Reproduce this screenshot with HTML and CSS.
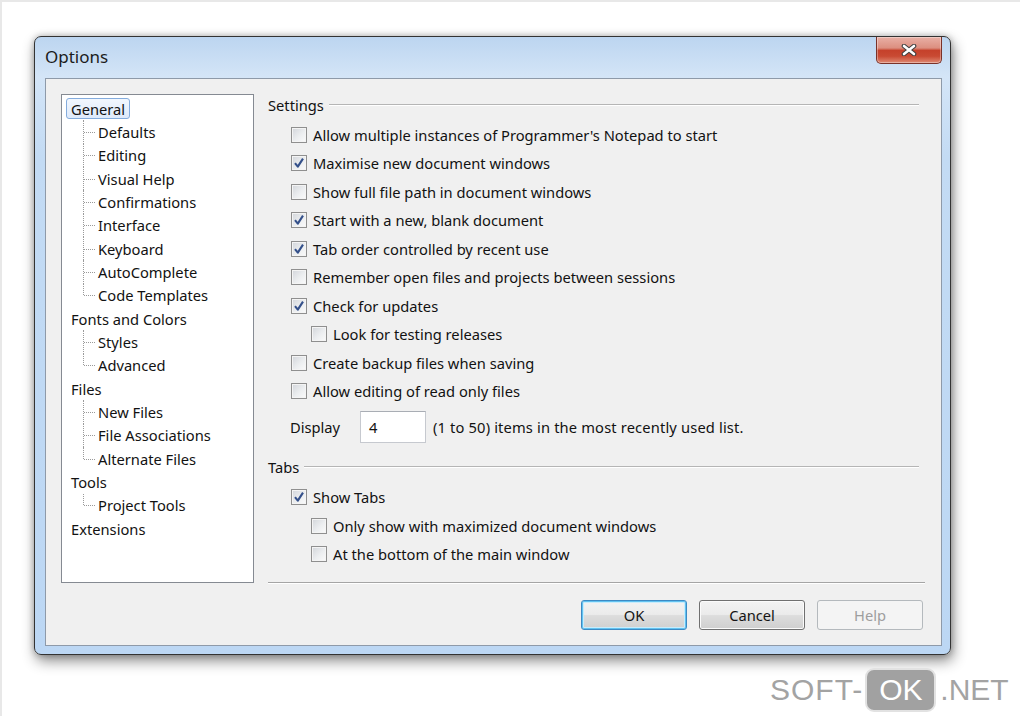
FILE: index.html
```html
<!DOCTYPE html>
<html>
<head>
<meta charset="utf-8">
<title>Options</title>
<link rel="stylesheet" href="styles.css">
</head>
<body>
<div class="page">
  <div class="window">
    <div class="titlebar">
      <div class="title">Options</div>
      <div class="close">
        <svg width="16" height="12" viewBox="0 0 16 12">
          <path d="M3 2 L13 10 M13 2 L3 10" stroke="#3d3d3d" stroke-width="4.6" stroke-linecap="round"/>
          <path d="M3 2 L13 10 M13 2 L3 10" stroke="#ffffff" stroke-width="2.6" stroke-linecap="round"/>
        </svg>
      </div>
    </div>
    <div class="client">
      <div class="main">
        <div class="tree">
          <ul class="roots">
            <li class="top">
              <div class="row"><span class="label selected">General</span></div>
              <ul class="children">
                <li><div class="row">Defaults</div></li>
                <li><div class="row">Editing</div></li>
                <li><div class="row">Visual Help</div></li>
                <li><div class="row">Confirmations</div></li>
                <li><div class="row">Interface</div></li>
                <li><div class="row">Keyboard</div></li>
                <li><div class="row">AutoComplete</div></li>
                <li><div class="row">Code Templates</div></li>
              </ul>
            </li>
            <li class="top">
              <div class="row"><span class="label">Fonts and Colors</span></div>
              <ul class="children">
                <li><div class="row">Styles</div></li>
                <li><div class="row">Advanced</div></li>
              </ul>
            </li>
            <li class="top">
              <div class="row"><span class="label">Files</span></div>
              <ul class="children">
                <li><div class="row">New Files</div></li>
                <li><div class="row">File Associations</div></li>
                <li><div class="row">Alternate Files</div></li>
              </ul>
            </li>
            <li class="top">
              <div class="row"><span class="label">Tools</span></div>
              <ul class="children">
                <li><div class="row">Project Tools</div></li>
              </ul>
            </li>
            <li class="top">
              <div class="row"><span class="label">Extensions</span></div>
            </li>
          </ul>
        </div>
        <div class="panel">
          <div class="group-head"><span>Settings</span><span class="line"></span></div>
          <div class="checks">
            <div class="cb-row"><span class="cb"></span><span>Allow multiple instances of Programmer's Notepad to start</span></div>
            <div class="cb-row"><span class="cb checked"><svg width="14" height="14" viewBox="0 0 14 14"><path d="M3 7.2 L5.8 10.6 L11 2.6" fill="none" stroke="#34508a" stroke-width="2.1" stroke-linejoin="round"/></svg></span><span>Maximise new document windows</span></div>
            <div class="cb-row"><span class="cb"></span><span>Show full file path in document windows</span></div>
            <div class="cb-row"><span class="cb checked"><svg width="14" height="14" viewBox="0 0 14 14"><path d="M3 7.2 L5.8 10.6 L11 2.6" fill="none" stroke="#34508a" stroke-width="2.1" stroke-linejoin="round"/></svg></span><span>Start with a new, blank document</span></div>
            <div class="cb-row"><span class="cb checked"><svg width="14" height="14" viewBox="0 0 14 14"><path d="M3 7.2 L5.8 10.6 L11 2.6" fill="none" stroke="#34508a" stroke-width="2.1" stroke-linejoin="round"/></svg></span><span>Tab order controlled by recent use</span></div>
            <div class="cb-row"><span class="cb"></span><span>Remember open files and projects between sessions</span></div>
            <div class="cb-row"><span class="cb checked"><svg width="14" height="14" viewBox="0 0 14 14"><path d="M3 7.2 L5.8 10.6 L11 2.6" fill="none" stroke="#34508a" stroke-width="2.1" stroke-linejoin="round"/></svg></span><span>Check for updates</span></div>
            <div class="cb-row sub"><span class="cb"></span><span>Look for testing releases</span></div>
            <div class="cb-row"><span class="cb"></span><span>Create backup files when saving</span></div>
            <div class="cb-row"><span class="cb"></span><span>Allow editing of read only files</span></div>
          </div>
          <div class="display-row">
            <span class="display-label">Display</span>
            <span class="input">4</span>
            <span class="display-text">(1 to 50) items in the most recently used list.</span>
          </div>
          <div class="group-head tabs-head"><span>Tabs</span><span class="line"></span></div>
          <div class="checks">
            <div class="cb-row"><span class="cb checked"><svg width="14" height="14" viewBox="0 0 14 14"><path d="M3 7.2 L5.8 10.6 L11 2.6" fill="none" stroke="#34508a" stroke-width="2.1" stroke-linejoin="round"/></svg></span><span>Show Tabs</span></div>
            <div class="cb-row sub"><span class="cb"></span><span>Only show with maximized document windows</span></div>
            <div class="cb-row sub"><span class="cb"></span><span>At the bottom of the main window</span></div>
          </div>
          <div class="separator"></div>
        </div>
      </div>
      <div class="buttons">
        <div class="btn default">OK</div>
        <div class="btn">Cancel</div>
        <div class="btn disabled">Help</div>
      </div>
    </div>
  </div>
  <div class="watermark">
    <span class="wm-text wm-soft">SOFT-</span><span class="wm-box">OK</span><span class="wm-text">.NET</span>
  </div>
</div>
</body>
</html>
```

FILE: styles.css
```css
html, body {
  margin: 0;
  padding: 0;
  background: #ffffff;
}

.page {
  position: relative;
  width: 1020px;
  height: 716px;
  box-sizing: border-box;
  border-top: 2px solid #e8e8e8;
  border-left: 2px solid #e8e8e8;
  padding: 34px 0 0 32px;
  overflow: hidden;
  font-family: "Noto Sans", "Open Sans", sans-serif;
  font-size: 14.7px;
  color: #121212;
}

.window {
  width: 917px;
  height: 619px;
  box-sizing: border-box;
  border: 1px solid #333333;
  border-radius: 7px;
  background: linear-gradient(180deg, #bcd5f0 0px, #d4e5f7 40px, #c3dbf4 120px, #bcd7f4 100%);
  padding: 0 8px 8px 10px;
  display: flex;
  flex-direction: column;
  box-shadow: 2px 6px 14px rgba(0, 0, 0, 0.45), 0 0 6px rgba(0, 0, 0, 0.25);
}

.titlebar {
  height: 41px;
  display: flex;
  justify-content: space-between;
  align-items: flex-start;
  flex: none;
}

.title {
  margin-top: 9px;
  font-size: 17px;
  line-height: 22px;
  color: #1c1c1c;
}

.close {
  width: 66px;
  height: 27px;
  box-sizing: border-box;
  border: 1px solid #7a3229;
  border-top: none;
  border-radius: 0 0 5px 5px;
  background: linear-gradient(180deg, #e9b0a6 0%, #dc8f80 42%, #c5412b 52%, #c94a33 74%, #df8a74 100%);
  display: flex;
  align-items: center;
  justify-content: center;
  box-shadow: inset 0 0 0 1px rgba(255, 255, 255, 0.35);
}

.client {
  flex: 1;
  border: 1px solid #8e9aa9;
  background: #f0f0f0;
  padding: 15px 16px 0 15px;
  display: flex;
  flex-direction: column;
}

.main {
  display: flex;
  gap: 14px;
  height: 489px;
  flex: none;
}

/* Tree */
.tree {
  width: 193px;
  height: 489px;
  box-sizing: border-box;
  border: 1px solid #858a92;
  background: #ffffff;
  padding: 2px 0 0 4px;
  flex: none;
}

.tree ul {
  list-style: none;
  margin: 0;
  padding: 0;
}

.row {
  height: 23.333px;
  display: flex;
  align-items: center;
  white-space: nowrap;
}

.label {
  display: inline-block;
  height: 21px;
  line-height: 20px;
  box-sizing: border-box;
  border: 1px solid transparent;
  border-radius: 3px;
  padding: 0 4px;
}

.label.selected {
  border-color: #84acdd;
  background: linear-gradient(180deg, #f2f7fe 0%, #dde9fa 100%);
}

.children {
  margin-left: 17px !important;
}

.children > li {
  position: relative;
  padding-left: 15px;
}

.children > li::before {
  content: "";
  position: absolute;
  left: 0;
  top: 0;
  bottom: 0;
  border-left: 1px dotted #9a9a9a;
}

.children > li:last-child::before {
  bottom: 50%;
}

.children > li::after {
  content: "";
  position: absolute;
  left: 1px;
  top: 50%;
  width: 11px;
  border-top: 1px dotted #9a9a9a;
}

/* Right panel */
.panel {
  flex: 1;
  display: flex;
  flex-direction: column;
}

.group-head {
  height: 22px;
  display: flex;
  align-items: center;
  gap: 5px;
  padding-right: 6px;
  flex: none;
}

.group-head .line {
  flex: 1;
  height: 0;
  border-top: 1px solid #b5b5b5;
  border-bottom: 1px solid #ffffff;
}

.tabs-head {
  margin-top: 11px;
}

.checks {
  margin-top: 4.8px;
  padding-left: 23px;
  flex: none;
}

.cb-row {
  height: 28.44px;
  display: flex;
  align-items: center;
  gap: 6px;
  white-space: nowrap;
}

.cb-row.sub {
  padding-left: 20px;
}

.cb {
  width: 16px;
  height: 16px;
  box-sizing: border-box;
  border: 1px solid #8f8f8f;
  background: linear-gradient(135deg, #d2d5da 0%, #eceef0 55%, #fbfbfb 100%);
  box-shadow: inset 0 0 0 1px #f4f4f4;
  display: flex;
  align-items: center;
  justify-content: center;
  flex: none;
}

.display-row {
  margin-top: 4px;
  height: 36px;
  display: flex;
  align-items: center;
  padding-left: 22px;
  flex: none;
  white-space: nowrap;
}

.display-label {
  width: 70px;
}

.input {
  width: 66px;
  height: 32px;
  box-sizing: border-box;
  border: 1px solid #c6c9cf;
  border-top-color: #a9adb4;
  background: #ffffff;
  padding-left: 8px;
  line-height: 30px;
}

.display-text {
  margin-left: 7px;
  letter-spacing: 0.15px;
}

.separator {
  margin-top: auto;
  border-top: 1px solid #a5a5a5;
  border-bottom: 1px solid #ffffff;
  margin-bottom: -1px;
}

/* Buttons */
.buttons {
  margin-top: 17px;
  display: flex;
  justify-content: flex-end;
  gap: 12px;
  padding-right: 2px;
  flex: none;
}

.btn {
  width: 106px;
  height: 30px;
  box-sizing: border-box;
  border: 1px solid #707070;
  border-radius: 3px;
  background: linear-gradient(180deg, #f3f3f3 0%, #ebebeb 48%, #dddddd 52%, #cfcfcf 100%);
  box-shadow: inset 0 0 0 1px #fbfbfb;
  display: flex;
  align-items: center;
  justify-content: center;
  color: #151515;
}

.btn.default {
  border-color: #3c8ac4;
  box-shadow: inset 0 0 0 1px #62c2f0, inset 0 0 0 2px #c8ecfc;
}

.btn.disabled {
  border-color: #b4b9bd;
  background: #f4f4f4;
  box-shadow: none;
  color: #9e9e9e;
}

/* Watermark overlay */
.watermark {
  position: absolute;
  left: 768px;
  top: 666px;
  display: flex;
  align-items: center;
  font-family: "Liberation Sans", Arial, sans-serif;
  font-size: 30px;
  color: #a3a3a3;
}

.wm-soft {
  letter-spacing: 1px;
}

.wm-box {
  margin: 0 4px 0 2px;
  width: 71px;
  height: 44px;
  box-sizing: border-box;
  border-radius: 9px;
  background: #a1a1a1;
  border: 2px solid #e2e2e2;
  color: #ffffff;
  display: flex;
  align-items: center;
  justify-content: center;
}
```
